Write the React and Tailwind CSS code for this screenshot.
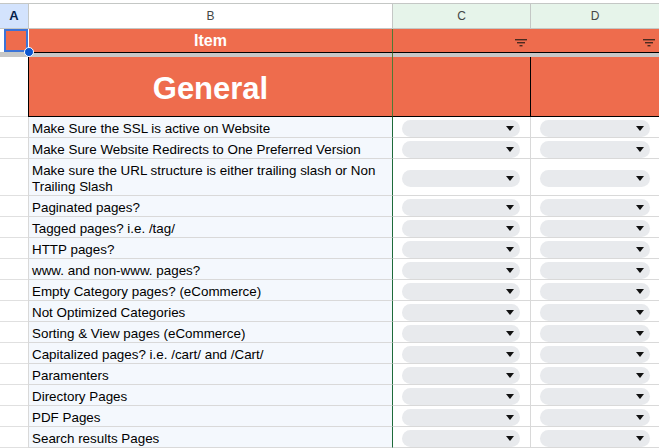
import React from 'react';

const rows = [
    { text: 'Make Sure the SSL is active on Website' },
    { text: 'Make Sure Website Redirects to One Preferred Version' },
    { text: 'Make sure the URL structure is either trailing slash or Non Trailing Slash', tall: true },
    { text: 'Paginated pages?' },
    { text: 'Tagged pages? i.e. /tag/' },
    { text: 'HTTP pages?' },
    { text: 'www. and non-www. pages?' },
    { text: 'Empty Category pages? (eCommerce)' },
    { text: 'Not Optimized Categories' },
    { text: 'Sorting & View pages (eCommerce)' },
    { text: 'Capitalized pages? i.e. /cart/ and /Cart/' },
    { text: 'Paramenters' },
    { text: 'Directory Pages' },
    { text: 'PDF Pages' },
    { text: 'Search results Pages' },
];

const FilterIcon = () => (
    <svg width="12" height="8" viewBox="0 0 12 8" className="absolute right-[4px] top-[10px]">
        <rect x="0" y="0" width="12" height="1.4" fill="#4a2a20" />
        <rect x="2" y="3" width="8" height="1.4" fill="#4a2a20" />
        <rect x="4.5" y="6" width="3" height="1.4" fill="#4a2a20" />
    </svg>
);

const Chip = ({ width }) => (
    <div className={`h-[17px] rounded-full bg-[#e8eaed] flex items-center justify-end pr-[6px] ${width}`}>
        <svg width="8" height="5" viewBox="0 0 8 5">
            <path d="M0 0 L8 0 L4 5 Z" fill="#111" />
        </svg>
    </div>
);

export default function App() {
    return (
        <div className="w-[659px] h-[448px] overflow-hidden bg-white relative" style={{ fontFamily: '"Liberation Sans", Arial, sans-serif' }}>
            {/* column headers */}
            <div className="h-[3px] bg-white" />
            <div className="flex h-[26px] border-t border-b border-[#c4c7c5] text-[12px] text-[#444746]">
                <div className="w-[29px] bg-[#d3e3fd] border-r border-[#c4c7c5] flex items-center justify-center font-bold text-[#041e49] text-[13px]">A</div>
                <div className="w-[363px] flex items-center justify-center">B</div>
                <div className="w-[139px] bg-[#e6f4ea] border-l border-r border-[#c4c7c5] flex items-center justify-center">C</div>
                <div className="flex-1 bg-[#e6f4ea] flex items-center justify-center">D</div>
            </div>

            {/* row 1 */}
            <div className="flex h-[24px]">
                <div className="w-[29px] pl-[4px] border-b border-[#c4c7c5]">
                    <div className="w-[24px] h-[23px] bg-[#ee6c4d] border-2 border-[#3b73d8]" />
                </div>
                <div className="w-[363px] bg-[#ee6c4d] border-b border-black flex items-center justify-center text-white font-bold text-[16px]">Item</div>
                <div className="w-[139px] bg-[#ee6c4d] border-l border-[#4f7a34] border-b border-b-black relative"><FilterIcon /></div>
                <div className="flex-1 bg-[#ee6c4d] border-b border-black relative"><FilterIcon /></div>
            </div>

            {/* freeze bar */}
            <div className="flex h-[4px]">
                <div className="w-[392px] bg-[#c7c7c7]" />
                <div className="w-[1px] bg-[#4f7a34]" />
                <div className="flex-1 bg-[#c7c7c7]" />
            </div>

            {/* row 2 */}
            <div className="flex h-[60px]">
                <div className="w-[28px] bg-white border-b border-[#e0e0e0]" />
                <div className="w-[364px] bg-[#ee6c4d] border-l border-b border-black flex items-center justify-center pt-[5px] text-white font-bold text-[31px]">General</div>
                <div className="w-[139px] bg-[#ee6c4d] border-l border-[#4f7a34] border-r border-r-black border-b border-b-black" />
                <div className="flex-1 bg-[#ee6c4d] border-b border-black" />
            </div>

            {/* data rows */}
            {rows.map((row, idx) => (
                <div key={idx} className={`flex ${row.tall ? 'h-[37px]' : 'h-[21px]'}`}>
                    <div className="w-[28px] bg-white border-b border-[#e0e0e0]" />
                    <div className="w-[364px] bg-[#f4f8fd] border-l border-b border-[#d9d9d9] px-[3px] pt-[4px] flex items-center text-[13.4px] leading-[16px] text-black">
                        {row.text}
                    </div>
                    <div className="w-[139px] border-l border-[#1e6b3a] border-r border-r-[#d9d9d9] border-b border-b-[#d9d9d9] flex items-center pl-[9px] pt-[2px]">
                        <Chip width="w-[118px]" />
                    </div>
                    <div className="flex-1 border-b border-[#d9d9d9] flex items-center pl-[9px] pt-[2px]">
                        <Chip width="w-[110px]" />
                    </div>
                </div>
            ))}

            {/* selection handle */}
            <div className="absolute left-[24px] top-[47px] w-[10px] h-[10px] rounded-full bg-[#0b57d0] border border-white" />
        </div>
    );
}
